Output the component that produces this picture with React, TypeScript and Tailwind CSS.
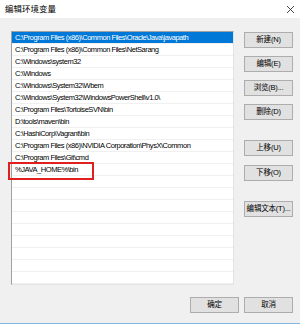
import React from "react";

const paths = [
  "C:\\Program Files (x86)\\Common Files\\Oracle\\Java\\javapath",
  "C:\\Program Files (x86)\\Common Files\\NetSarang",
  "C:\\Windows\\system32",
  "C:\\Windows",
  "C:\\Windows\\System32\\Wbem",
  "C:\\Windows\\System32\\WindowsPowerShell\\v1.0\\",
  "C:\\Program Files\\TortoiseSVN\\bin",
  "D:\\tools\\maven\\bin",
  "C:\\HashiCorp\\Vagrant\\bin",
  "C:\\Program Files (x86)\\NVIDIA Corporation\\PhysX\\Common",
  "C:\\Program Files\\Git\\cmd",
  "%JAVA_HOME%\\bin",
];

const rows = [...paths, ...Array(9).fill("")];

function Btn({ label, className = "" }: { label: string; className?: string }) {
  return (
    <button
      className={
        "w-[49px] h-[16px] bg-[#e1e1e1] border border-[#adadad] text-[7.5px] tracking-[-0.2px] leading-none whitespace-nowrap text-black flex items-center justify-center " +
        className
      }
    >
      {label}
    </button>
  );
}

export default function App() {
  return (
    <div
      className="relative w-[300px] h-[324px] bg-[#f0f0f0] flex flex-col border-b border-[#7fb6e2]"
      style={{ fontFamily: '"Liberation Sans", "Noto Sans CJK SC", sans-serif' }}
    >
      {/* title bar */}
      <div className="h-[18px] bg-white flex items-center justify-between pl-[5px] pr-[4px] shrink-0">
        <span className="text-[8.5px] text-black">编辑环境变量</span>
        <svg width="9" height="9" viewBox="0 0 9 9" className="mr-[1px]">
          <path d="M1 1 L8 8 M8 1 L1 8" stroke="#333" strokeWidth="0.9" />
        </svg>
      </div>

      <div className="flex pt-[13px] pl-[11px] gap-[10px]">
        {/* list */}
        <div className="w-[223px] h-[254px] bg-white border border-[#a0a0a0] border-r-[#e3e3e3] border-b-[#e3e3e3] overflow-hidden">
          {rows.map((p, i) => (
            <div
              key={i}
              className={
                "h-[12px] pl-[3px] flex items-center text-[7.5px] tracking-[-0.45px] whitespace-nowrap border-b border-[#f0f0f0] " +
                (i === 0 ? "bg-[#0078d7] text-white" : "text-black")
              }
            >
              {p}
            </div>
          ))}
        </div>

        {/* side buttons */}
        <div className="flex flex-col pt-[1px]">
          <Btn label="新建(N)" />
          <Btn label="编辑(E)" className="mt-[8px]" />
          <Btn label="浏览(B)..." className="mt-[8px]" />
          <Btn label="删除(D)" className="mt-[8px]" />
          <Btn label="上移(U)" className="mt-[20px]" />
          <Btn label="下移(O)" className="mt-[9px]" />
          <Btn label="编辑文本(T)..." className="mt-[20px]" />
        </div>
      </div>

      {/* bottom buttons */}
      <div className="flex justify-end gap-[5px] pr-[7px] mt-[12px]">
        <Btn label="确定" className="border-[#0078d7]" />
        <Btn label="取消" />
      </div>

      {/* red annotation box */}
      <div className="absolute left-[8px] top-[162px] w-[86px] h-[18px] border-2 border-[#e0201c]" />
    </div>
  );
}
